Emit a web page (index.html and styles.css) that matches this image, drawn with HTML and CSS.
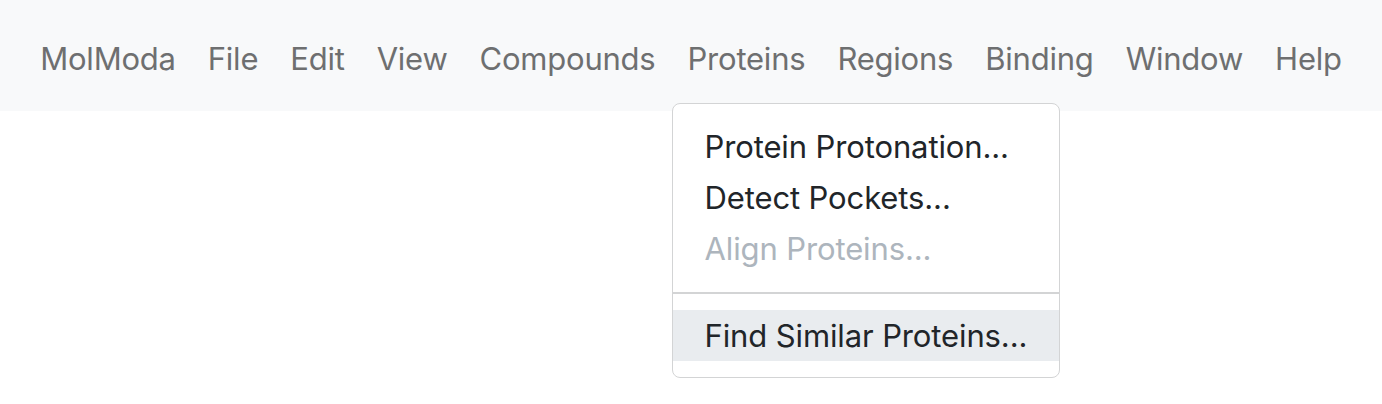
FILE: index.html
```html
<!DOCTYPE html>
<html lang="en">
<head>
<meta charset="utf-8">
<title>MolModa</title>
<link rel="stylesheet" href="styles.css">
</head>
<body>
<nav class="navbar">
  <ul class="nav">
    <li class="nav-item"><a class="nav-link">MolModa</a></li>
    <li class="nav-item"><a class="nav-link">File</a></li>
    <li class="nav-item"><a class="nav-link">Edit</a></li>
    <li class="nav-item"><a class="nav-link">View</a></li>
    <li class="nav-item"><a class="nav-link">Compounds</a></li>
    <li class="nav-item dropdown">
      <a class="nav-link">Proteins</a>
      <ul class="dropdown-menu">
        <li><a class="dropdown-item">Protein Protonation...</a></li>
        <li><a class="dropdown-item">Detect Pockets...</a></li>
        <li><a class="dropdown-item disabled">Align Proteins...</a></li>
        <li><hr class="dropdown-divider"></li>
        <li><a class="dropdown-item active">Find Similar Proteins...</a></li>
      </ul>
    </li>
    <li class="nav-item"><a class="nav-link">Regions</a></li>
    <li class="nav-item"><a class="nav-link">Binding</a></li>
    <li class="nav-item"><a class="nav-link">Window</a></li>
    <li class="nav-item"><a class="nav-link">Help</a></li>
  </ul>
</nav>
</body>
</html>
```
FILE: styles.css
```css
* { box-sizing: border-box; }
html, body {
  margin: 0;
  padding: 0;
  background: #ffffff;
  font-family: Inter, "Liberation Sans", sans-serif;
}
body { min-height: 404px; }
.navbar {
  background: #f8f9fa;
  height: 111px;
  display: flex;
  justify-content: center;
  align-items: flex-start;
}
.nav {
  list-style: none;
  margin: 0;
  padding: 0;
  display: flex;
}
.nav-item { position: relative; }
.nav-link {
  display: block;
  padding: 35px 16px 0;
  font-size: 31px;
  letter-spacing: -0.22px;
  line-height: 48px;
  color: #6e6f70;
  white-space: nowrap;
}
.dropdown-menu {
  position: absolute;
  top: 103px;
  left: 0;
  margin: 0;
  padding: 17px 0 16px;
  list-style: none;
  background: #ffffff;
  border: 1px solid #d3d4d5;
  border-radius: 8px;
  z-index: 10;
}
.dropdown-item {
  display: block;
  padding: 8px 32px;
  font-size: 31px;
  letter-spacing: -0.12px;
  line-height: 35px;
  color: #212529;
  white-space: nowrap;
}
.dropdown-item.disabled { color: #adb5bd; }
.dropdown-item.active { background: #e9ecef; }
.dropdown-divider {
  margin: 18px 0 16px;
  border: 0;
  border-top: 2px solid #d3d4d5;
  height: 0;
}
```
